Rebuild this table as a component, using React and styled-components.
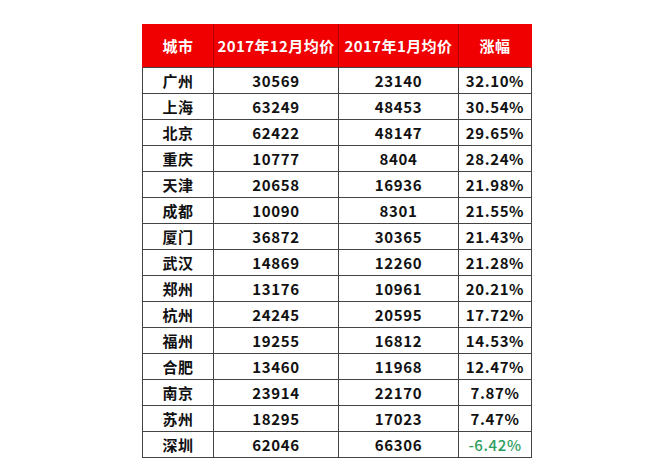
import styled, { createGlobalStyle } from "styled-components";

const GlobalStyle = createGlobalStyle`
  html, body {
    margin: 0;
    padding: 0;
    background: #fff;
  }
  body {
    font-family: "Noto Sans CJK SC", "Noto Sans", sans-serif;
  }
`;

const Page = styled.div`
  width: 672px;
  height: 466px;
  padding: 24px 0 0 142px;
  box-sizing: border-box;
`;

const Table = styled.table`
  border-collapse: collapse;
  table-layout: fixed;
  width: 390px;
`;

const HeadCell = styled.th`
  height: 43px;
  padding: 0;
  background: #f00000;
  color: #fff;
  font-size: 15px;
  font-weight: 700;
  letter-spacing: 0.4px;
  text-align: center;
  border-left: 1px solid #b00000;
  border-right: 1px solid #b00000;

  &:first-child {
    border-left-color: #f00000;
  }
  &:last-child {
    border-right-color: #f00000;
  }
`;

const Cell = styled.td`
  height: 25px;
  padding: 0;
  border: 1px solid #444;
  color: ${(p) => (p.$down ? "#2e9e5e" : "#111")};
  font-size: 15px;
  font-weight: ${(p) => (p.$down ? 500 : 700)};
  letter-spacing: 0.6px;
  text-align: center;
  line-height: 25px;
`;

const columns = [
  { title: "城市", width: 71 },
  { title: "2017年12月均价", width: 125 },
  { title: "2017年1月均价", width: 120 },
  { title: "涨幅", width: 73 },
];

const rows = [
  ["广州", "30569", "23140", "32.10%"],
  ["上海", "63249", "48453", "30.54%"],
  ["北京", "62422", "48147", "29.65%"],
  ["重庆", "10777", "8404", "28.24%"],
  ["天津", "20658", "16936", "21.98%"],
  ["成都", "10090", "8301", "21.55%"],
  ["厦门", "36872", "30365", "21.43%"],
  ["武汉", "14869", "12260", "21.28%"],
  ["郑州", "13176", "10961", "20.21%"],
  ["杭州", "24245", "20595", "17.72%"],
  ["福州", "19255", "16812", "14.53%"],
  ["合肥", "13460", "11968", "12.47%"],
  ["南京", "23914", "22170", "7.87%"],
  ["苏州", "18295", "17023", "7.47%"],
  ["深圳", "62046", "66306", "-6.42%"],
];

export default function App() {
  return (
    <Page>
      <GlobalStyle />
      <Table>
        <colgroup>
          {columns.map((c) => (
            <col key={c.title} style={{ width: c.width }} />
          ))}
        </colgroup>
        <thead>
          <tr>
            {columns.map((c) => (
              <HeadCell key={c.title}>{c.title}</HeadCell>
            ))}
          </tr>
        </thead>
        <tbody>
          {rows.map((r) => (
            <tr key={r[0]}>
              {r.map((v, i) => (
                <Cell key={i} $down={v.startsWith("-")}>
                  {v}
                </Cell>
              ))}
            </tr>
          ))}
        </tbody>
      </Table>
    </Page>
  );
}
